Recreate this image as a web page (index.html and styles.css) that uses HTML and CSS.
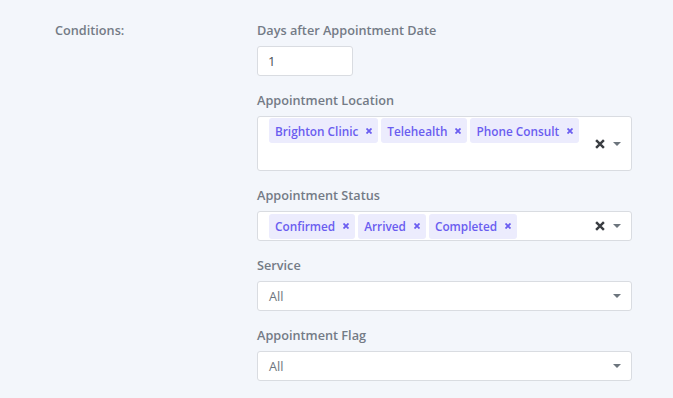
FILE: index.html
```html
<!DOCTYPE html>
<html lang="en">
<head>
    <meta charset="UTF-8">
    <meta name="viewport" content="width=device-width, initial-scale=1.0">
    <title>Conditions</title>
    <link rel="stylesheet" href="styles.css">
</head>
<body>
    <div class="form-row">
        <div class="row-label">Conditions:</div>
        <div class="row-fields">
            <div class="field">
                <label>Days after Appointment Date</label>
                <input type="text" class="small-input" value="1">
            </div>
            <div class="field">
                <label>Appointment Location</label>
                <div class="multi tall">
                    <div class="tags">
                        <span class="tag">Brighton Clinic <svg class="tag-x" viewBox="0 0 6 6"><path d="M0.5 0.5L5.5 5.5M5.5 0.5L0.5 5.5"/></svg></span>
                        <span class="tag">Telehealth <svg class="tag-x" viewBox="0 0 6 6"><path d="M0.5 0.5L5.5 5.5M5.5 0.5L0.5 5.5"/></svg></span>
                        <span class="tag">Phone Consult <svg class="tag-x" viewBox="0 0 6 6"><path d="M0.5 0.5L5.5 5.5M5.5 0.5L0.5 5.5"/></svg></span>
                    </div>
                    <div class="controls">
                        <svg class="clear" viewBox="0 0 9 9"><path d="M1 1L8 8M8 1L1 8"/></svg>
                        <span class="caret"></span>
                    </div>
                </div>
            </div>
            <div class="field">
                <label>Appointment Status</label>
                <div class="multi">
                    <div class="tags">
                        <span class="tag">Confirmed <svg class="tag-x" viewBox="0 0 6 6"><path d="M0.5 0.5L5.5 5.5M5.5 0.5L0.5 5.5"/></svg></span>
                        <span class="tag">Arrived <svg class="tag-x" viewBox="0 0 6 6"><path d="M0.5 0.5L5.5 5.5M5.5 0.5L0.5 5.5"/></svg></span>
                        <span class="tag">Completed <svg class="tag-x" viewBox="0 0 6 6"><path d="M0.5 0.5L5.5 5.5M5.5 0.5L0.5 5.5"/></svg></span>
                    </div>
                    <div class="controls">
                        <svg class="clear" viewBox="0 0 9 9"><path d="M1 1L8 8M8 1L1 8"/></svg>
                        <span class="caret"></span>
                    </div>
                </div>
            </div>
            <div class="field">
                <label>Service</label>
                <div class="select">
                    <span>All</span>
                    <span class="caret"></span>
                </div>
            </div>
            <div class="field">
                <label>Appointment Flag</label>
                <div class="select">
                    <span>All</span>
                    <span class="caret"></span>
                </div>
            </div>
        </div>
    </div>
</body>
</html>
```
FILE: styles.css
```css
body {
    margin: 0;
    padding: 0;
    background-color: #f3f6fb;
    font-family: "Open Sans", Arial, sans-serif;
    font-size: 12.7px;
    color: #6c757d;
}
.form-row {
    display: flex;
    padding: 20px 0 0 55px;
}
.row-label {
    width: 202px;
    font-weight: 600;
    line-height: 20px;
    color: #737b86;
}
.row-fields {
    width: 375px;
}
.field {
    margin-bottom: 14px;
}
.field label {
    display: block;
    font-weight: 600;
    line-height: 20px;
    color: #737b86;
    margin-bottom: 6px;
}
.small-input {
    box-sizing: border-box;
    width: 96px;
    height: 30px;
    padding: 0 10px;
    border: 1px solid #d9dce1;
    border-radius: 3px;
    background: white;
    font-family: "Open Sans", Arial, sans-serif;
    font-size: 13px;
    color: #495057;
    outline: none;
}
.multi, .select {
    box-sizing: border-box;
    display: flex;
    align-items: center;
    background: white;
    border: 1px solid #d9dce1;
    border-radius: 3px;
}
.multi {
    height: 30px;
    padding: 0 0 0 11px;
}
.multi.tall {
    height: 55px;
}
.multi.tall .tags {
    align-self: flex-start;
    margin-top: 1px;
}
.tags {
    flex: 1;
    display: flex;
    gap: 3px;
}
.tag {
    display: inline-flex;
    align-items: center;
    height: 25px;
    padding: 0 6px;
    border-radius: 3px;
    background-color: #ececfd;
    color: #6a5df0;
    font-size: 11.8px;
    font-weight: 600;
}
.tag-x {
    width: 6px;
    height: 6px;
    margin-left: 8px;
    stroke: #6a5df0;
    stroke-width: 1.8;
    fill: none;
}
.controls {
    display: flex;
    align-items: center;
    padding-right: 10px;
}
.clear {
    width: 10px;
    height: 10px;
    margin-right: 8px;
    stroke: #3a3d42;
    stroke-width: 2.2;
    fill: none;
}
.caret {
    display: inline-block;
    width: 0;
    height: 0;
    border-left: 4px solid transparent;
    border-right: 4px solid transparent;
    border-top: 4px solid #6c757d;
}
.select {
    height: 30px;
    justify-content: space-between;
    padding: 0 10px 0 11px;
}
```
